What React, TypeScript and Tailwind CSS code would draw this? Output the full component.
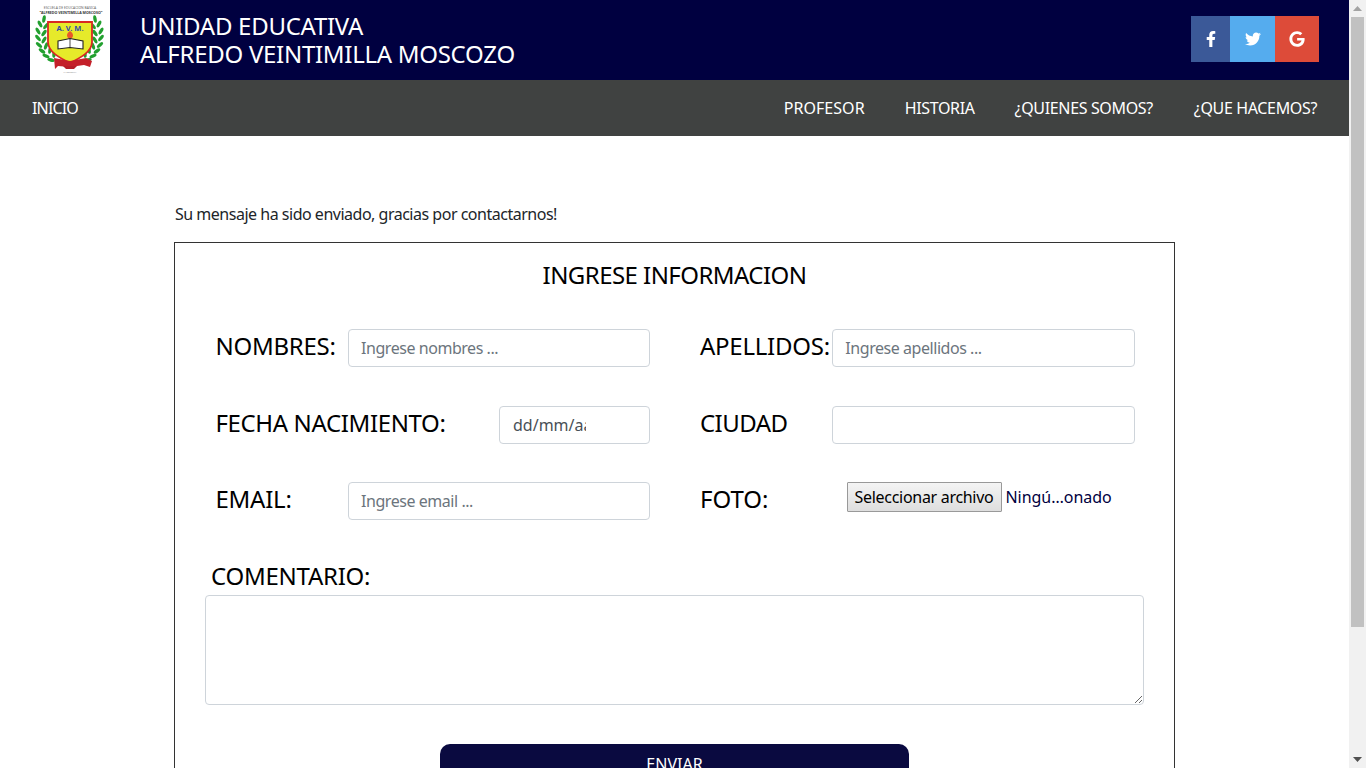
import { FaFacebookF, FaTwitter, FaGoogle } from "react-icons/fa";

const font = { fontFamily: '"Noto Sans", "Open Sans", sans-serif' };

const leafPts: [number, number, number][] = [
  [14, 19, 10],
  [10, 24, -28],
  [16, 26, 40],
  [8, 31, -30],
  [14, 33, 35],
  [8, 38, -40],
  [14, 40, 30],
  [9, 45, -50],
  [16, 46, 20],
  [12, 51, -55],
  [20, 50, 10],
  [16, 56, -65],
  [24, 54, 5],
  [21, 60, -75],
];

function Logo() {
  return (
    <svg viewBox="0 0 80 80" className="w-20 h-20 shrink-0">
      <rect width="80" height="80" fill="#fff" />
      <text x="40" y="8.5" textAnchor="middle" fontSize="3.4" fill="#666">ESCUELA DE EDUCACION BASICA</text>
      <text x="41" y="13.5" textAnchor="middle" fontSize="3.6" fontWeight="700" fill="#333">"ALFREDO VEINTIMILLA MOSCOSO"</text>
      {leafPts.map(([x, y, r], i) => (
        <g key={i} fill="#22a02f">
          <ellipse cx={x} cy={y} rx="1.7" ry="3.8" transform={`rotate(${r} ${x} ${y})`} />
          <ellipse cx={79 - x} cy={y} rx="1.7" ry="3.8" transform={`rotate(${-r} ${79 - x} ${y})`} />
        </g>
      ))}
      <path d="M18 22 H62 V42 C62 52 50 58 40 63 C30 58 18 52 18 42 Z" fill="#e6ea2a" stroke="#d92a22" strokeWidth="1.8" />
      <text x="40" y="31" textAnchor="middle" fontSize="7.5" fontWeight="700" fill="#2f4aa8">A. V. M.</text>
      <path d="M40 31 C44 33 44 38 40 39 C36 38 36 33 40 31 Z" fill="#e8582a" />
      <path d="M28 41 L40 38.5 L53 41 V49 L40 47.5 L28 49 Z" fill="#fff" stroke="#222" strokeWidth="1.1" />
      <path d="M40 39 V48" stroke="#222" strokeWidth="0.8" />
      <path d="M24 58 L40 61 L56 58 L62 61 L60 67 L54 65 L40 67 L28 66 L25 69 Z" fill="#c4202a" />
      <path d="M33 66 H47 L44 69 H36 Z" fill="#b51e28" />
      <text x="40" y="72.5" textAnchor="middle" fontSize="2.2" fill="#888">LA ESTRELLA</text>
    </svg>
  );
}

function Label({ children, className = "" }: { children: React.ReactNode; className?: string }) {
  return <label className={`-ml-[0.5px] pb-[4px] text-[24px] leading-[36px] text-black whitespace-nowrap ${className}`}>{children}</label>;
}

const inputCls =
  "h-[38px] border border-[#ced4da] rounded-[4px] px-3 text-[16px] bg-white placeholder:text-[#6c757d] text-[#495057] outline-none";

export default function App() {
  return (
    <div className="h-screen overflow-hidden flex bg-white" style={font}>
      <div className="flex-1 min-w-0 overflow-hidden">
        <header className="h-20 bg-[#000040] flex items-center pl-[30px] pr-[30px]">
          <Logo />
          <div className="ml-[30px] text-white text-[24px] leading-[28px] tracking-[-0.28px]">
            <div>UNIDAD EDUCATIVA</div>
            <div>ALFREDO VEINTIMILLA MOSCOZO</div>
          </div>
          <div className="ml-auto mb-[2px] flex h-[46px] text-white text-[16px]">
            <div className="w-[39px] bg-[#3b5998] flex items-center justify-center"><FaFacebookF /></div>
            <div className="w-[45px] bg-[#55acee] flex items-center justify-center"><FaTwitter /></div>
            <div className="w-[44px] bg-[#dd4b39] flex items-center justify-center"><FaGoogle /></div>
          </div>
        </header>
        <nav className="h-14 bg-[#404241] flex items-center text-white text-[16px] tracking-[-0.35px] pl-8 pr-8">
          <a className="tracking-[-0.85px]">INICIO</a>
          <div className="ml-auto flex gap-10">
            <a className="tracking-[0.05px]">PROFESOR</a>
            <a>HISTORIA</a>
            <a className="mr-px">¿QUIENES SOMOS?</a>
            <a>¿QUE HACEMOS?</a>
          </div>
        </nav>
        <main className="w-[1001px] ml-[174px] pt-[66px]">
          <p className="pl-px text-[16px] leading-6 text-[#212529] mb-[16px] tracking-[-0.49px]">Su mensaje ha sido enviado, gracias por contactarnos!</p>
          <section className="border border-[#333] h-[600px] px-[30px]">
            <h2 className="text-center text-[24px] leading-[36px] text-black tracking-[-0.55px] pt-[14px] mb-[22px] h-[50px] box-content">INGRESE INFORMACION</h2>
            <div className="grid grid-cols-2 gap-x-[50px] pl-[11px] pr-[9px] gap-y-[39px]">
              <div className="flex items-center h-[38px]">
                <Label className="w-[132.5px] tracking-[-0.25px]">NOMBRES:</Label>
                <input className={`${inputCls} w-[302px] tracking-[-0.45px]`} placeholder="Ingrese nombres ..." />
              </div>
              <div className="flex items-center h-[38px]">
                <Label className="w-[132.5px] tracking-[-0.25px]">APELLIDOS:</Label>
                <input className={`${inputCls} w-[303px] tracking-[-0.45px]`} placeholder="Ingrese apellidos ..." />
              </div>
              <div className="flex items-center h-[38px]">
                <Label className="w-[283.5px] tracking-[-0.37px]">FECHA NACIMIENTO:</Label>
                <input className={`${inputCls} w-[151px] pl-[13px] pr-[63px]`} readOnly value="dd/mm/aaaa" />
              </div>
              <div className="flex items-center h-[38px]">
                <Label className="w-[132.5px] tracking-[-0.55px]">CIUDAD</Label>
                <input className={`${inputCls} w-[303px]`} />
              </div>
              <div className="flex items-center h-[38px] -mt-px">
                <Label className="w-[132.5px] tracking-[-0.25px]">EMAIL:</Label>
                <input className={`${inputCls} w-[302px] tracking-[-0.45px]`} placeholder="Ingrese email ..." />
              </div>
              <div className="flex items-center h-[38px] -mt-px">
                <Label className="w-[146.5px] tracking-[0px]">FOTO:</Label>
                <div className="flex items-center -mt-[8px] text-[16px] text-[#000040] tracking-[-0.3px]">
                  <button className="h-[30px] w-[155px] border border-[#999] rounded-[1px] bg-gradient-to-b from-[#f4f4f4] to-[#dedede] text-black">Seleccionar archivo</button>
                  <span className="ml-[4px] tracking-[-0.05px]">Ningú…onado</span>
                </div>
              </div>
            </div>
            <div className="mt-[39px] pl-[6px] h-[36px]">
              <label className="block text-[24px] leading-[34px] text-black tracking-[-0.25px] whitespace-nowrap">COMENTARIO:</label>
            </div>
            <textarea className="block w-[939px] h-[110px] border border-[#ced4da] rounded-[4px] outline-none" />
            <button className="block mx-auto mt-[39px] w-[469px] h-[60px] rounded-[10px] bg-[#0a0a40] text-white text-[16px] pb-[21px]">ENVIAR</button>
          </section>
        </main>
      </div>
      <aside className="w-[17px] shrink-0 bg-[#f1f1f1] flex flex-col items-stretch">
        <div className="h-[17px] flex items-center justify-center">
          <svg width="9" height="5" viewBox="0 0 9 5"><path d="M4.5 0 L9 5 H0 Z" fill="#a3a3a3" /></svg>
        </div>
        <div className="h-[610px] mx-[2px] bg-[#c1c1c1]" />
        <div className="flex-1" />
        <div className="h-[17px] flex items-center justify-center">
          <svg width="9" height="5" viewBox="0 0 9 5"><path d="M0 0 H9 L4.5 5 Z" fill="#505050" /></svg>
        </div>
      </aside>
    </div>
  );
}
